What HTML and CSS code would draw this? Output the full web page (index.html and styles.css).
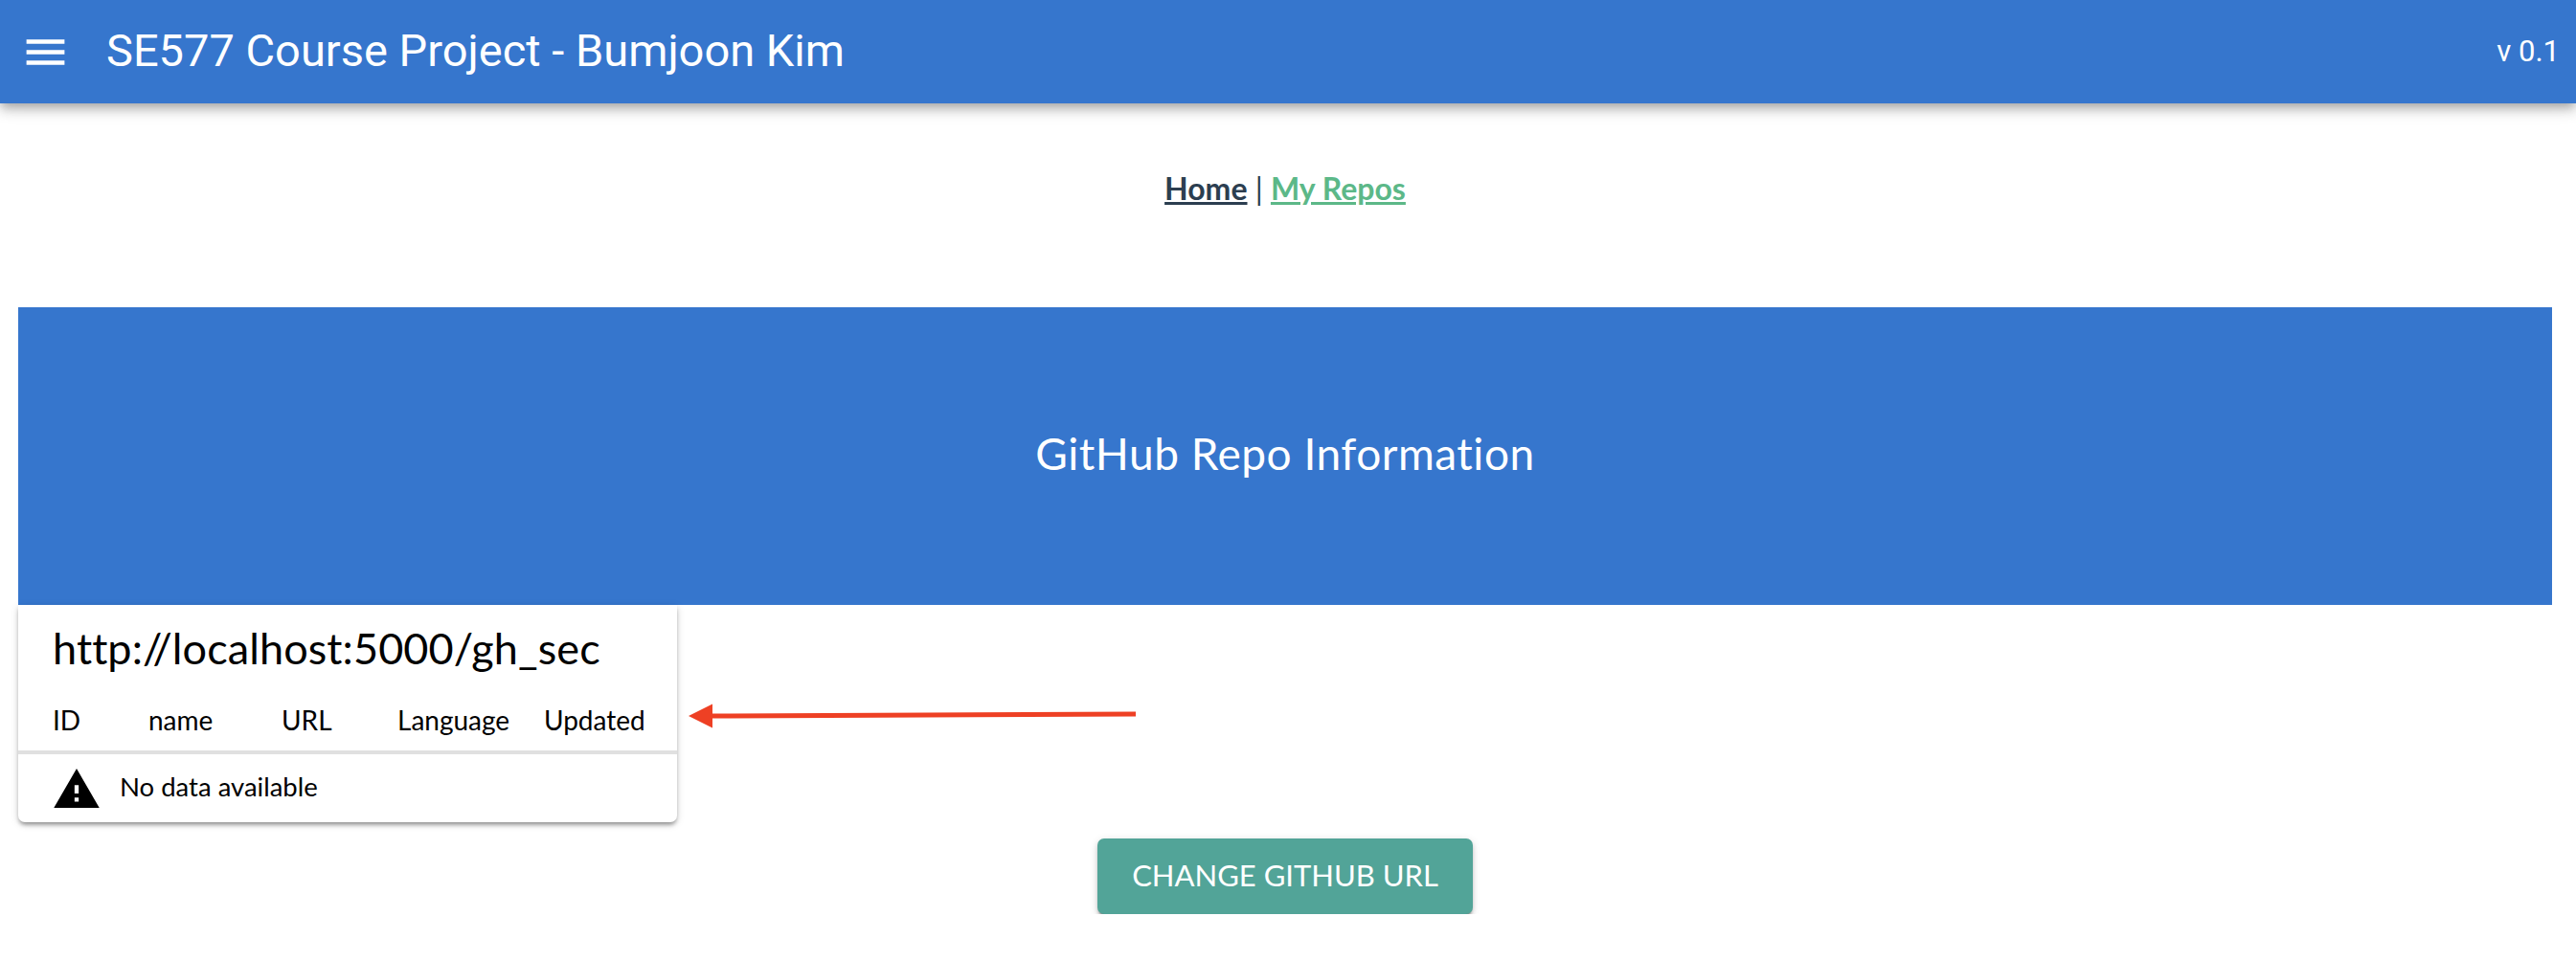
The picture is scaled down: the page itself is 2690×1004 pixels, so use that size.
FILE: index.html
```html
<!DOCTYPE html>
<html lang="en">
<head>
<meta charset="UTF-8">
<meta name="viewport" content="width=device-width, initial-scale=1.0">
<title>SE577 Course Project - Bumjoon Kim</title>
<link rel="stylesheet" href="styles.css">
</head>
<body>
<header class="toolbar">
    <svg class="menu-icon" viewBox="0 0 24 24"><path d="M3 18h18v-2H3v2zm0-5h18v-2H3v2zm0-7v2h18V6H3z"/></svg>
    <div class="toolbar-title">SE577 Course Project - Bumjoon Kim</div>
    <div class="toolbar-version">v 0.1</div>
</header>
<main class="content">
    <nav class="nav">
        <a class="nav-home" href="#">Home</a> | <a class="nav-repos" href="#">My Repos</a>
    </nav>
    <section class="banner">GitHub Repo Information</section>
    <div class="table-row">
        <section class="card">
            <h2 class="card-title">http://localhost:5000/gh_sec</h2>
            <table class="data-table">
                <tr>
                    <th class="col-id">ID</th>
                    <th class="col-name">name</th>
                    <th class="col-url">URL</th>
                    <th class="col-lang">Language</th>
                    <th>Updated</th>
                </tr>
                <tr>
                    <td colspan="5">
                        <div class="no-data">
                            <svg class="warn-icon" viewBox="1 2 22 19"><path d="M1 21h22L12 2 1 21zm12-3h-2v-2h2v2zm0-4h-2v-4h2v4z"/></svg>
                            <span>No data available</span>
                        </div>
                    </td>
                </tr>
            </table>
        </section>
        <svg class="arrow" width="480" height="40" viewBox="0 0 480 40">
            <polygon points="1,21 26,8.500 26,33.500" fill="#ee4024"/>
            <line x1="24" y1="21" x2="468" y2="19" stroke="#ee4024" stroke-width="5"/>
        </svg>
    </div>
    <div class="actions">
        <button class="btn">CHANGE GITHUB URL</button>
    </div>
</main>
</body>
</html>
```

FILE: styles.css
```css
body {
    margin: 0;
    font-family: "Lato", "Open Sans", sans-serif;
    font-variant-ligatures: none;
    background-color: #fff;
    overflow: hidden;
}
.toolbar {
    height: 108px;
    display: flex;
    align-items: center;
    background-color: #3676cd;
    color: #fff;
    font-family: "Roboto", sans-serif;
    box-shadow: 0 4px 9px -2px rgba(0, 0, 0, 0.2), 0 8px 11px 0 rgba(0, 0, 0, 0.14), 0 2px 22px 0 rgba(0, 0, 0, 0.12);
}
.menu-icon {
    width: 53px;
    height: 53px;
    margin-left: 21px;
    fill: #fff;
}
.toolbar-title {
    margin-left: 37px;
    margin-bottom: 4px;
    font-size: 47px;
    font-weight: 400;
}
.toolbar-version {
    margin-left: auto;
    margin-right: 17px;
    margin-bottom: 2px;
    font-size: 31px;
}
.content {
    margin: 0 25px 0 19px;
}
.nav {
    margin-top: 57px;
    height: 156px;
    text-align: center;
    font-size: 32px;
    line-height: 64px;
    color: #2c3e50;
}
.nav a {
    font-weight: 700;
}
.nav-home {
    color: #2c3e50;
}
.nav-repos {
    color: #5cb888;
}
.banner {
    height: 311px;
    padding-bottom: 6px;
    box-sizing: border-box;
    display: flex;
    align-items: center;
    justify-content: center;
    background-color: #3676cd;
    color: #fff;
    font-size: 46px;
    letter-spacing: 0.5px;
}
.table-row {
    position: relative;
}
.card {
    width: 688px;
    height: 227px;
    background-color: #fff;
    border-radius: 0 0 7px 7px;
    box-shadow: 0 4px 4px -2px rgba(0, 0, 0, 0.3), 0 3px 5px 0 rgba(0, 0, 0, 0.14), 0 2px 10px 0 rgba(0, 0, 0, 0.12);
}
.card-title {
    margin: 0;
    padding: 15px 0 0 36px;
    height: 76px;
    box-sizing: border-box;
    font-size: 45px;
    line-height: 60px;
    font-weight: 400;
    letter-spacing: 0.1px;
    color: #000;
}
.data-table {
    width: 100%;
    border-collapse: collapse;
    color: #000;
}
.data-table th {
    height: 78px;
    padding: 11px 0 0;
    box-sizing: border-box;
    text-align: left;
    font-size: 28px;
    font-weight: 400;
    border-bottom: 4px solid #e0e0e0;
}
.data-table td {
    padding: 0;
}
.data-table th.col-id {
    width: 136px;
    padding-left: 36px;
}
.col-name {
    width: 139px;
}
.col-url {
    width: 121px;
}
.col-lang {
    width: 153px;
}
.no-data {
    display: flex;
    align-items: center;
    height: 71px;
    padding-left: 36px;
    font-size: 27.500px;
}
.warn-icon {
    width: 50px;
    height: 41px;
    margin-right: 20px;
}
.no-data span {
    margin-bottom: 5px;
}
.arrow {
    position: absolute;
    left: 699px;
    top: 95px;
}
.actions {
    display: flex;
    justify-content: center;
    margin-top: 17px;
}
.btn {
    width: 392px;
    height: 79px;
    padding: 0 0 4px;
    border: none;
    border-radius: 7px;
    background-color: #52a498;
    color: #fff;
    font-family: inherit;
    font-size: 31px;
    box-shadow: 0 4px 3px -2px rgba(0, 0, 0, 0.4), 0 3px 5px 0 rgba(0, 0, 0, 0.14), 0 2px 10px 0 rgba(0, 0, 0, 0.12);
}
```
